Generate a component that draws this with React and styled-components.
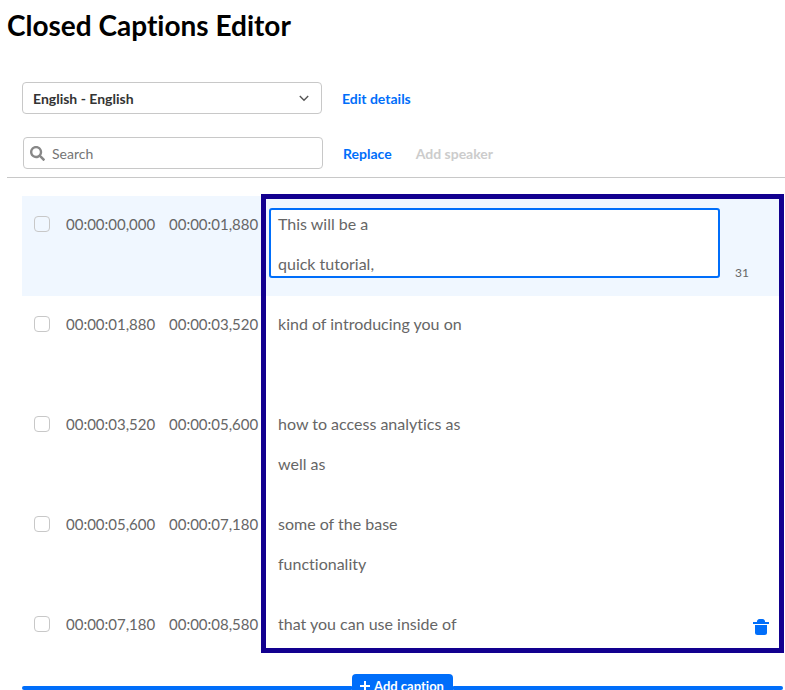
import React, { useState } from 'react'
import { styled, createGlobalStyle } from 'styled-components'
import { FaSearch } from 'react-icons/fa'

const GlobalStyle = createGlobalStyle`
    * {
        box-sizing: border-box;
    }
    body {
        margin: 0;
        background-color: white;
        color: #666;
        font-family: Lato, "Open Sans", sans-serif;
        font-size: 16px;
        font-variant-ligatures: none;
    }
    button, input, select, textarea {
        font-family: inherit;
        font-variant-ligatures: none;
    }
`
const Page = styled.main`
    height: 100vh;
    overflow: hidden;
`
const Title = styled.h1`
    margin: 0;
    padding: 7px 7px 0;
    color: black;
    font-size: 28px;
    font-weight: bold;
    line-height: 36px;
`
const Header = styled.header`
    display: flex;
    flex-direction: column;
    gap: 23px;
    margin: 39px 0 18px 7px;
    padding: 0 15px 8px;
    border-bottom: 1px solid #c8c8c8;
`
const Toolbar = styled.div`
    display: flex;
    align-items: center;
    gap: 20px;
`
const SearchBar = styled(Toolbar)`
    padding-left: 1px;
`
const Field = styled.div`
    display: flex;
    align-items: center;
    position: relative;
    width: 300px;
    color: ${(props) => props.$color};

    svg {
        position: absolute;
        pointer-events: none;
    }
`
const Select = styled.select`
    appearance: none;
    width: 100%;
    height: 32px;
    padding: 0 30px 0 10px;
    border: 1px solid #c8c8c8;
    border-radius: 4px;
    background-color: white;
    color: #333;
    font-size: 14px;
    font-weight: bold;

    + svg {
        right: 12px;
    }
`
const SearchInput = styled.input`
    width: 100%;
    height: 32px;
    padding: 0 10px 0 28px;
    border: 1px solid #c8c8c8;
    border-radius: 4px;
    color: #333;
    font-size: 14px;

    &::placeholder {
        color: #757575;
        opacity: 1;
    }
    + svg {
        left: 7px;
    }
`
const TextButton = styled.button`
    padding: 2px 0 0;
    border: none;
    background: none;
    color: #006efa;
    font-size: 14px;
    font-weight: bold;
    line-height: 20px;
    cursor: pointer;

    &:disabled {
        color: #ccc;
        cursor: default;
    }
    & + & {
        margin-left: 4px;
    }
`
const Captions = styled.section`
    position: relative;
    margin-left: 22px;
`
const List = styled.ul`
    list-style: none;
    margin: 0;
    padding: 0;
    height: calc(100vh - 212px);
    overflow: hidden;
`
const Row = styled.li`
    display: flex;
    align-items: flex-start;
    height: 100px;
    margin-right: 4px;
    padding: 12px 11px 0 12px;
    background-color: ${(props) => (props.$active ? '#f0f7ff' : 'white')};
`
const Checkbox = styled.input`
    appearance: none;
    flex: none;
    width: 16px;
    height: 16px;
    margin: 8px 16px 0 0;
    border: 1px solid #c8c8c8;
    border-radius: 4px;

    &:checked {
        background-color: #006efa;
        border-color: #006efa;
    }
`
const TimeInput = styled.input`
    flex: none;
    width: 95px;
    height: 20px;
    margin: 6px 8px 0 0;
    padding: 0;
    border: none;
    background: none;
    color: #666;
    font-size: 15px;
    line-height: 20px;
`
const CaptionText = styled.textarea`
    flex: 1;
    min-width: 0;
    height: 70px;
    margin-left: -3px;
    padding: 4px 7px 0;
    border: 2px solid ${(props) => (props.$active ? '#006efa' : 'transparent')};
    border-radius: 3px;
    outline: none;
    background-color: white;
    color: #666;
    font-size: 16px;
    line-height: 20px;
    resize: none;
    overflow: hidden;
`
const Side = styled.div`
    display: flex;
    justify-content: flex-end;
    align-items: ${(props) => (props.$active ? 'flex-end' : 'flex-start')};
    width: 50px;
    height: 72px;
    padding: 10px 1px 0 0;
`
const Count = styled.span`
    margin-right: 20px;
    font-size: 12px;
    line-height: 14px;
`
const DeleteButton = styled.button`
    display: flex;
    padding: 0;
    border: none;
    background: none;
    color: #006efa;
    cursor: pointer;
`
const Frame = styled.div`
    position: absolute;
    top: -2px;
    right: 1px;
    bottom: 49px;
    left: 239px;
    border: 5px solid #12008f;
    pointer-events: none;
`
const Footer = styled.div`
    display: flex;
    align-items: center;
    margin-right: 2px;
`
const Bar = styled.span`
    flex: 1;
    height: 4px;
    border-radius: 2px;
    background-color: #006efa;
`
const AddButton = styled.button`
    display: flex;
    align-items: center;
    gap: 3px;
    height: 28px;
    margin: 0 -1px;
    padding: 0 9px 4px 7px;
    border: none;
    border-radius: 4px;
    background-color: #006efa;
    color: white;
    font-size: 13px;
    font-weight: bold;
    cursor: pointer;
`

const initialCaptions = [
  { start: '00:00:00,000', end: '00:00:01,880', text: 'This will be a\n\nquick tutorial,' },
  { start: '00:00:01,880', end: '00:00:03,520', text: 'kind of introducing you on' },
  { start: '00:00:03,520', end: '00:00:05,600', text: 'how to access analytics as\n\nwell as' },
  { start: '00:00:05,600', end: '00:00:07,180', text: 'some of the base\n\nfunctionality' },
  { start: '00:00:07,180', end: '00:00:08,580', text: 'that you can use inside of' },
]

const ChevronIcon = () => (
  <svg width="12" height="8" viewBox="0 0 12 8" fill="none" stroke="currentColor" strokeWidth="1.4">
    <path d="M1.8 2 6 6.200l4.200-4.200" />
  </svg>
)

const TrashIcon = () => (
  <svg width="16" height="17" viewBox="0 0 16 17" fill="currentColor">
    <path d="M0 4h4a2.500 2.500 0 0 1 2.500-3h3A2.500 2.500 0 0 1 12 4h4v2H0z" />
    <path d="M2 7h12v7.500a2.500 2.500 0 0 1-2.500 2.500h-7A2.500 2.500 0 0 1 2 14.500z" />
  </svg>
)

const PlusIcon = () => (
  <svg width="12" height="12" viewBox="0 0 12 12" stroke="currentColor" strokeWidth="2">
    <path d="M6 1v10M1 6h10" />
  </svg>
)

const CaptionRow = ({ caption, active, last, onChange, onFocus, onDelete }) => {
  const set = (key) => (e) => onChange({ ...caption, [key]: e.target.value })
  return (
    <Row $active={active}>
      <Checkbox type="checkbox" aria-label="Select caption" />
      <TimeInput aria-label="Start time" value={caption.start} onChange={set('start')} />
      <TimeInput aria-label="End time" value={caption.end} onChange={set('end')} />
      <CaptionText
        aria-label="Caption text"
        spellCheck={false}
        $active={active}
        value={caption.text}
        onChange={set('text')}
        onFocus={onFocus}
      />
      <Side $active={active}>
        {active && <Count>{caption.text.length}</Count>}
        {last && (
          <DeleteButton aria-label="Delete caption" onClick={onDelete}>
            <TrashIcon />
          </DeleteButton>
        )}
      </Side>
    </Row>
  )
}

const App = () => {
  const [captions, setCaptions] = useState(initialCaptions)
  const [active, setActive] = useState(0)

  return (
    <Page>
      <GlobalStyle />
      <Title>Closed Captions Editor</Title>
      <Header>
        <Toolbar>
          <Field $color="#555">
            <Select aria-label="Caption language" defaultValue="en">
              <option value="en">English - English</option>
            </Select>
            <ChevronIcon />
          </Field>
          <TextButton>Edit details</TextButton>
        </Toolbar>
        <SearchBar>
          <Field $color="#888">
            <SearchInput type="text" aria-label="Search" placeholder="Search" />
            <FaSearch size={15} />
          </Field>
          <TextButton>Replace</TextButton>
          <TextButton disabled>Add speaker</TextButton>
        </SearchBar>
      </Header>
      <Captions>
        <List>
          {captions.map((caption, i) => (
            <CaptionRow
              key={i}
              caption={caption}
              active={i === active}
              last={i === captions.length - 1}
              onChange={(next) => setCaptions(captions.map((c, j) => (j === i ? next : c)))}
              onFocus={() => setActive(i)}
              onDelete={() => setCaptions(captions.filter((c, j) => j !== i))}
            />
          ))}
        </List>
        <Footer>
          <Bar />
          <AddButton onClick={() => setCaptions([...captions, { start: '', end: '', text: '' }])}>
            <PlusIcon />
            Add caption
          </AddButton>
          <Bar />
        </Footer>
        <Frame />
      </Captions>
    </Page>
  )
}

export default App
